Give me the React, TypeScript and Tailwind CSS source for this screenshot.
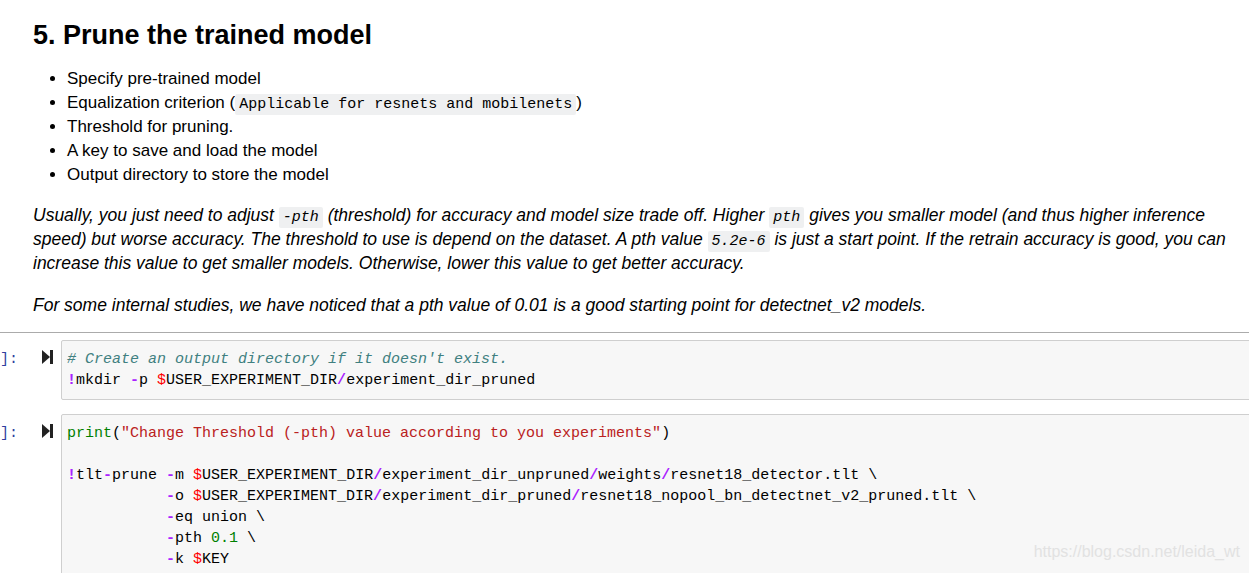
import React from 'react';

const mono = "font-['Liberation_Mono','Courier_New',monospace]";

function InlineCode({ children }: { children: React.ReactNode }) {
  return (
    <code className={`${mono} bg-[#eff0f1] px-[4px] py-[2px] text-[15px] leading-none rounded-[2px]`}>
      {children}
    </code>
  );
}

// little token helpers for the code cells
const Op = ({ children }: { children: React.ReactNode }) => (
  <span className="text-[#aa22ff] font-bold">{children}</span>
);
const Var = ({ children }: { children: React.ReactNode }) => (
  <span className="text-[#ff0000]">{children}</span>
);

function RunIcon() {
  return (
    <svg width="11" height="14" viewBox="0 0 11 14" className="mt-[1px]">
      <polygon points="0,0 8,7 0,14" fill="#222" />
      <rect x="8" y="0" width="3" height="14" fill="#222" />
    </svg>
  );
}

function CodeCell({ lines, className = '' }: { lines: React.ReactNode[]; className?: string }) {
  return (
    <div className={`flex items-start ${className}`}>
      <div className="w-[61px] shrink-0 flex items-start pt-[9px]">
        <span className={`${mono} text-[15px] leading-[21px] text-[#303f9f] w-[42px]`}>]:</span>
        <RunIcon />
      </div>
      <div className="flex-1 -mr-[20px] bg-[#f7f7f7] border border-[#cfcfcf] rounded-[2px] px-[5px] py-[8px]">
        <pre className={`${mono} text-[15px] leading-[21px] text-black`}>
          {lines.map((l, i) => (
            <div key={i} className="h-[21px] whitespace-pre">
              {l}
            </div>
          ))}
        </pre>
      </div>
    </div>
  );
}

export default function App() {
  const indent = '           ';

  const cell1 = [
    <span className="italic text-[#408080]"># Create an output directory if it doesn't exist.</span>,
    <>
      <Op>!</Op>mkdir <Op>-</Op>p <Var>$</Var>USER_EXPERIMENT_DIR<Op>/</Op>experiment_dir_pruned
    </>,
  ];

  const cell2 = [
    <>
      <span className="text-[#008000]">print</span>(
      <span className="text-[#ba2121]">"Change Threshold (-pth) value according to you experiments"</span>)
    </>,
    <> </>,
    <>
      <Op>!</Op>tlt<Op>-</Op>prune <Op>-</Op>m <Var>$</Var>USER_EXPERIMENT_DIR<Op>/</Op>experiment_dir_unpruned<Op>/</Op>weights<Op>/</Op>resnet18_detector.tlt \
    </>,
    <>
      {indent}<Op>-</Op>o <Var>$</Var>USER_EXPERIMENT_DIR<Op>/</Op>experiment_dir_pruned<Op>/</Op>resnet18_nopool_bn_detectnet_v2_pruned.tlt \
    </>,
    <>
      {indent}<Op>-</Op>eq union \
    </>,
    <>
      {indent}<Op>-</Op>pth <span className="text-[#008000]">0.1</span> \
    </>,
    <>
      {indent}<Op>-</Op>k <Var>$</Var>KEY
    </>,
  ];

  return (
    <div className="relative w-full h-[573px] overflow-hidden bg-white text-black font-['Liberation_Sans',Arial,sans-serif]">
      {/* Markdown cell */}
      <div className="pl-[33px] pr-[20px]">
        <h1 className="mt-[18px] text-[27px] leading-[35px] font-bold">5. Prune the trained model</h1>

        <ul className="mt-[14px] list-disc pl-[34px] text-[17px] leading-[24px]">
          <li>Specify pre-trained model</li>
          <li>
            Equalization criterion (<InlineCode>Applicable for resnets and mobilenets</InlineCode>)
          </li>
          <li>Threshold for pruning.</li>
          <li>A key to save and load the model</li>
          <li>Output directory to store the model</li>
        </ul>

        <p className="mt-[16px] italic text-[17.5px] leading-[24px]">
          Usually, you just need to adjust <InlineCode>-pth</InlineCode> (threshold) for accuracy and model size trade
          off. Higher <InlineCode>pth</InlineCode> gives you smaller model (and thus higher inference speed) but worse
          accuracy. The threshold to use is depend on the dataset. A pth value <InlineCode>5.2e-6</InlineCode> is just a
          start point. If the retrain accuracy is good, you can increase this value to get smaller models. Otherwise,
          lower this value to get better accuracy.
        </p>

        <p className="mt-[18px] italic text-[17.5px] leading-[24px]">
          For some internal studies, we have noticed that a pth value of 0.01 is a good starting point for
          detectnet_v2 models.
        </p>
      </div>

      <div className="mt-[15px] border-t border-[#ababab]" />

      <CodeCell lines={cell1} className="mt-[7px]" />
      <CodeCell lines={cell2} className="mt-[14px]" />

      {/* watermark */}
      <div className="absolute right-[9px] bottom-[9px] text-[16px] text-[#e2e2e2]">
        https://blog.csdn.net/leida_wt
      </div>
    </div>
  );
}
